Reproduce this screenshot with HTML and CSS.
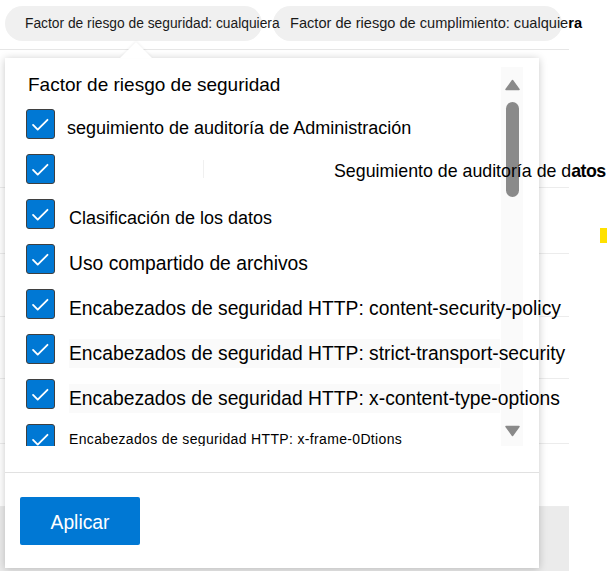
FILE: index.html
```html
<!DOCTYPE html>
<html lang="es">
<head>
<meta charset="utf-8">
<link rel="stylesheet" href="styles.css">
</head>
<body>
<div class="page">
  <div class="main">
    <div class="topbar">
      <div class="pill pill-1">Factor de riesgo de seguridad: cualquiera</div>
      <div class="pill pill-2">Factor de riesgo de cumplimiento: cualquie<b>ra</b></div>
    </div>
    <div class="bgrow bgrow-tall"></div>
    <div class="bgrow bgrow-66"></div>
    <div class="bgrow bgrow-63"></div>
    <div class="bgrow bgrow-62"></div>
    <div class="bgrow bgrow-65"></div>
    <div class="bgrow bgrow-63"></div>
    <div class="band"></div>

    <div class="panel">
      <div class="caret"></div>
      <div class="scrollarea">
        <div class="content">
          <div class="heading">Factor de riesgo de seguridad</div>
          <div class="row"><span class="cb"><svg viewBox="0 0 29 29"><path d="M6.5 15.5 L11.5 20.5 L22 10"/></svg></span><span class="label label-1">seguimiento de auditoría de Administración</span></div>
          <div class="row"><span class="cb"><svg viewBox="0 0 29 29"><path d="M6.5 15.5 L11.5 20.5 L22 10"/></svg></span><span class="tick"></span><span class="label label-2">Seguimiento de auditoría de d<b>atos</b></span></div>
          <div class="row"><span class="cb"><svg viewBox="0 0 29 29"><path d="M6.5 15.5 L11.5 20.5 L22 10"/></svg></span><span class="label label-3">Clasificación de los datos</span></div>
          <div class="row"><span class="cb"><svg viewBox="0 0 29 29"><path d="M6.5 15.5 L11.5 20.5 L22 10"/></svg></span><span class="label label-big">Uso compartido de archivos</span></div>
          <div class="row"><span class="cb"><svg viewBox="0 0 29 29"><path d="M6.5 15.5 L11.5 20.5 L22 10"/></svg></span><span class="label label-big">Encabezados de seguridad HTTP: content-security-policy</span></div>
          <div class="row"><span class="cb"><svg viewBox="0 0 29 29"><path d="M6.5 15.5 L11.5 20.5 L22 10"/></svg></span><span class="label label-big shaded">Encabezados de seguridad HTTP: strict-transport-security</span></div>
          <div class="row"><span class="cb"><svg viewBox="0 0 29 29"><path d="M6.5 15.5 L11.5 20.5 L22 10"/></svg></span><span class="label label-big shaded">Encabezados de seguridad HTTP: x-content-type-options</span></div>
          <div class="row"><span class="cb"><svg viewBox="0 0 29 29"><path d="M6.5 15.5 L11.5 20.5 L22 10"/></svg></span><span class="label label-small">Encabezados de seguridad HTTP: x-frame-0Dtions</span></div>
        </div>
        <div class="scrollbar">
          <svg class="arrow" viewBox="0 0 17 12"><path d="M2 10.5 L8.5 1.5 L15 10.5 Z"/></svg>
          <div class="thumb"></div>
          <div class="spacer"></div>
          <svg class="arrow" viewBox="0 0 17 12"><path d="M2 1.5 L8.5 10.5 L15 1.5 Z"/></svg>
        </div>
      </div>
      <div class="footer">
        <button class="apply">Aplicar</button>
      </div>
    </div>
  </div>
  <div class="side">
    <div class="mark"></div>
  </div>
</div>
</body>
</html>
```

FILE: styles.css
```css
html, body {
  margin: 0;
  padding: 0;
  background: #ffffff;
}
body {
  width: 607px;
  height: 571px;
  overflow: hidden;
  font-family: "Liberation Sans", Arial, sans-serif;
  color: #000;
}
.page {
  display: flex;
  height: 571px;
}
.main {
  position: relative;
  width: 569px;
  flex: none;
  display: flex;
  flex-direction: column;
}
.side {
  flex: 1;
  display: flex;
  justify-content: flex-end;
}
.mark {
  width: 7px;
  height: 15px;
  margin-top: 228px;
  background: #ffe100;
}
.topbar {
  border-bottom: 1px solid #e6e6e6;
  display: flex;
  align-items: flex-start;
  padding-top: 6px;
  box-sizing: border-box;
  height: 50px;
  flex: none;
}
.pill {
  height: 35px;
  border-radius: 18px;
  background: #f0f0f0;
  font-size: 13.8px;
  line-height: 35px;
  white-space: nowrap;
  box-sizing: border-box;
  color: #1a1a1a;
  flex: none;
}
.pill-1 {
  margin-left: 5px;
  width: 257px;
  padding-left: 20px;
  position: relative;
  z-index: 1;
}
.pill-2 {
  margin-left: 11px;
  width: 289px;
  padding-left: 17px;
  font-size: 14.6px;
}
.pill-2 b {
  color: #000;
}
.bgrow {
  border-bottom: 1px solid #ececec;
  flex: none;
}
.bgrow-tall { height: 137px; }
.bgrow-66 { height: 65px; }
.bgrow-63 { height: 62px; }
.bgrow-62 { height: 61px; }
.bgrow-65 { height: 64px; }
.band {
  flex: 1;
  background: #ebebeb;
}

.panel {
  position: absolute;
  left: 5px;
  top: 58px;
  width: 534px;
  height: 510px;
  background: #fff;
  box-shadow: 0 1px 8px rgba(0, 0, 0, 0.22);
  display: flex;
  flex-direction: column;
  z-index: 2;
}
.caret {
  position: absolute;
  left: 115px;
  top: -16px;
  width: 0;
  height: 0;
  border-left: 16px solid transparent;
  border-right: 16px solid transparent;
  border-bottom: 16px solid #fff;
  filter: drop-shadow(0 -1px 1px rgba(0,0,0,0.06));
}
.scrollarea {
  display: flex;
  height: 379px;
  margin-top: 9px;
  flex: none;
}
.content {
  width: 475px;
  min-width: 0;
  flex: none;
  padding-left: 21px;
  overflow-x: visible;
  overflow-y: clip;
  position: relative;
  z-index: 1;
}
.heading {
  height: 42px;
  line-height: 35px;
  font-size: 19px;
  padding-left: 2px;
  white-space: nowrap;
}
.row {
  height: 45px;
  display: flex;
  align-items: flex-start;
  white-space: nowrap;
}
.cb {
  flex: none;
  width: 29px;
  height: 30px;
  box-sizing: border-box;
  background: #0078d4;
  border: 1px solid #3f3f3f;
  border-radius: 3px;
  display: flex;
}
.cb svg {
  width: 27px;
  height: 28px;
}
.cb path {
  fill: none;
  stroke: #fff;
  stroke-width: 2;
  stroke-linecap: round;
  stroke-linejoin: round;
}
.label {
  flex: none;
  margin-left: 14px;
  margin-top: 5px;
  height: 29px;
  line-height: 29px;
  font-size: 18px;
}
.label-1 {
  margin-left: 12px;
}
.label-2 {
  margin-left: 130px;
  margin-top: 3px;
  font-size: 17.8px;
}
.label-2 b {
  font-weight: bold;
  letter-spacing: -0.6px;
}
.label-big {
  font-size: 19.3px;
}
.tick {
  flex: none;
  width: 1px;
  height: 18px;
  margin-left: 148px;
  margin-top: 6px;
  background: #f0f0f0;
}
.shaded {
  background: linear-gradient(#fafafa, #fafafa) no-repeat;
  background-size: 431px 100%;
}
.label-small {
  font-size: 14px;
  margin-top: 1px;
  letter-spacing: 0.34px;
}
.scrollbar {
  flex: none;
  width: 22px;
  background: #fafafa;
  display: flex;
  flex-direction: column;
  align-items: center;
  padding: 12px 0 9px;
  box-sizing: border-box;
}
.arrow {
  width: 17px;
  height: 12px;
  flex: none;
}
.arrow path {
  fill: #8a8a8a;
  stroke: #8a8a8a;
  stroke-width: 1.5;
  stroke-linejoin: round;
}
.thumb {
  width: 13px;
  height: 95px;
  margin-top: 11px;
  border-radius: 7px;
  background: #8a8a8a;
  flex: none;
}
.spacer {
  flex: 1;
}
.footer {
  flex: 1;
  margin-top: 26px;
  border-top: 1px solid #e1e1e1;
  padding: 24px 0 0 15px;
}
.apply {
  width: 120px;
  height: 48px;
  background: #0078d4;
  border: none;
  border-radius: 2px;
  color: #fff;
  font-family: "Liberation Sans", Arial, sans-serif;
  font-size: 19.3px;
  padding: 4px 0 0;
  margin: 0;
}
```
